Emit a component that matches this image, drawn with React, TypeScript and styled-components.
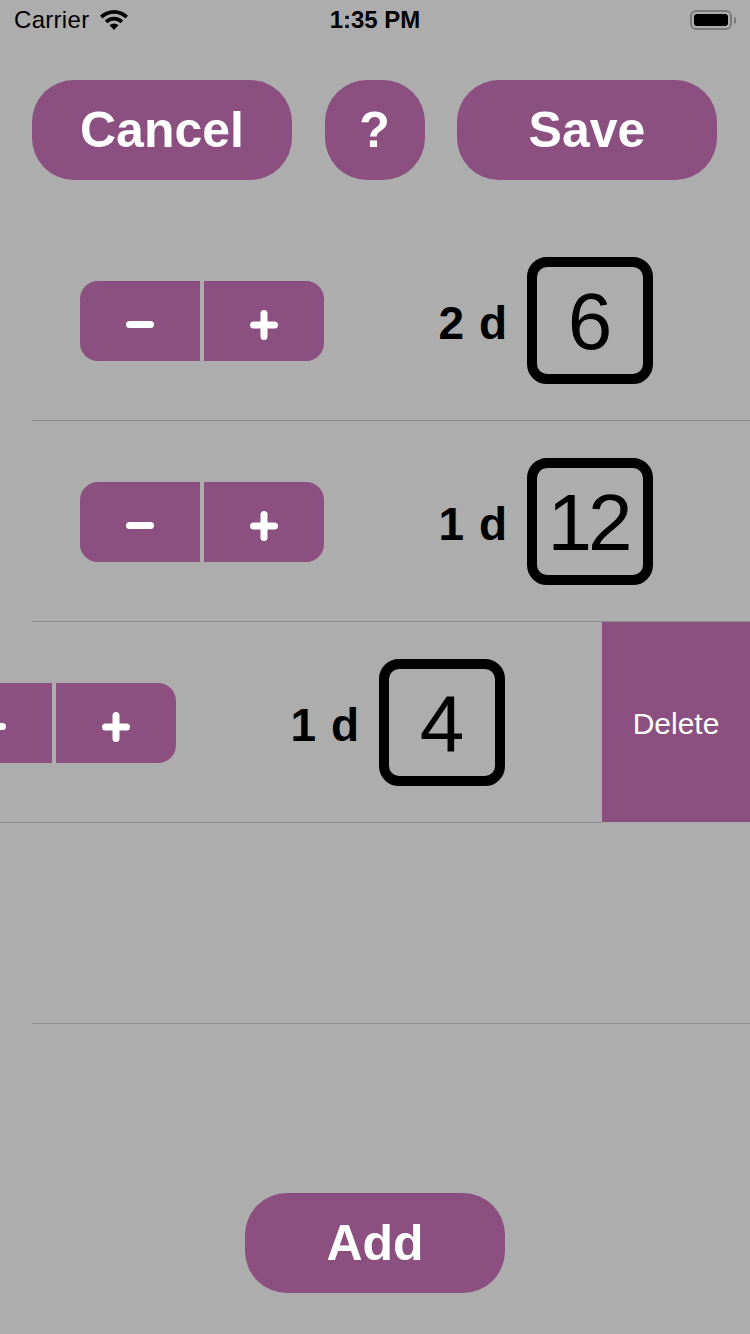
import React from "react";
import styled, { createGlobalStyle } from "styled-components";

const PURPLE = "#8b4f80";
const BG = "#adadad";

const Global = createGlobalStyle`
  html, body { margin: 0; padding: 0; background: ${BG}; }
  body { font-family: "Liberation Sans", Arial, sans-serif; }
  * { box-sizing: border-box; }
`;

const Screen = styled.div`
  width: 750px;
  height: 1334px;
  background: ${BG};
  display: flex;
  flex-direction: column;
  overflow: hidden;
`;

const StatusBar = styled.div`
  height: 40px;
  display: grid;
  grid-template-columns: 1fr auto 1fr;
  align-items: center;
  padding: 0 14px;
  color: #000;
  font-size: 24px;
`;

const Carrier = styled.div`
  display: flex;
  align-items: center;
  gap: 9px;
  font-size: 24px;
  letter-spacing: 0.3px;
`;

const Clock = styled.div`
  font-weight: 700;
  font-size: 24px;
`;

const BatteryWrap = styled.div`
  justify-self: end;
  display: flex;
  align-items: center;
  gap: 2px;
`;

const BatteryBody = styled.div`
  width: 42px;
  height: 20px;
  border: 2px solid #7a7a7a;
  border-radius: 6px;
  padding: 2px;
`;

const BatteryFill = styled.div`
  width: 100%;
  height: 100%;
  background: #000;
  border-radius: 3px;
`;

const BatteryNub = styled.div`
  width: 2px;
  height: 7px;
  background: #7a7a7a;
  border-radius: 0 2px 2px 0;
`;

const TopBar = styled.div`
  display: flex;
  justify-content: space-between;
  padding: 40px 33px 0 32px;
`;

const PillButton = styled.button<{ $w: number }>`
  width: ${(p) => p.$w}px;
  height: 100px;
  border: none;
  border-radius: 42px;
  background: ${PURPLE};
  color: #fff;
  font-family: "Liberation Sans", Arial, sans-serif;
  font-weight: 700;
  font-size: 50px;
  display: flex;
  align-items: center;
  justify-content: center;
  padding: 0;
  cursor: pointer;
`;

const List = styled.div`
  margin-top: 40px;
  display: flex;
  flex-direction: column;
`;

const Row = styled.div`
  width: 750px;
  height: 201px;
  overflow: hidden;
`;

const Track = styled.div<{ $shift: number }>`
  display: flex;
  width: ${(p) => 750 + p.$shift}px;
  transform: translateX(-${(p) => p.$shift}px);
`;

const Cell = styled.div`
  width: 750px;
  flex: none;
  height: 201px;
  display: flex;
  flex-direction: column;
`;

const CellContent = styled.div`
  height: 200px;
  display: flex;
  align-items: center;
  padding: 0 97px 0 80px;
`;

const Separator = styled.div`
  height: 1px;
  margin-left: 32px;
  background: #8c8c8c;
`;

const Stepper = styled.div`
  display: flex;
  gap: 4px;
  height: 80px;
  margin-top: 1px;
`;

const StepButton = styled.button<{ $side: "left" | "right" }>`
  width: 120px;
  height: 80px;
  border: none;
  padding: 8px 0 0;
  background: ${PURPLE};
  color: #fff;
  display: flex;
  align-items: center;
  justify-content: center;
  border-radius: ${(p) => (p.$side === "left" ? "18px 0 0 18px" : "0 18px 18px 0")};
`;

const Spacer = styled.div`
  flex: 1;
`;

const Label = styled.div`
  font-family: "Liberation Sans", Arial, sans-serif;
  font-weight: 700;
  font-size: 46px;
  letter-spacing: 1px;
  color: #000;
  margin-right: 19px;
  padding-top: 6px;
  white-space: pre;
`;

const Die = styled.div`
  width: 126px;
  height: 127px;
  border: 10px solid #000;
  border-radius: 20px;
  display: flex;
  align-items: center;
  justify-content: center;
  font-family: "Liberation Sans", Arial, sans-serif;
  font-weight: 400;
  font-size: 80px;
  letter-spacing: -4px;
  color: #000;
  padding-right: 4px;
  padding-top: 4px;
`;

const DeletePanel = styled.div`
  width: 148px;
  height: 200px;
  flex: none;
  background: ${PURPLE};
  color: #fff;
  font-size: 30px;
  display: flex;
  align-items: center;
  justify-content: center;
  padding-top: 3px;
`;

const EmptyCell = styled.div`
  height: 201px;
  display: flex;
  flex-direction: column;
  justify-content: flex-end;
`;

const Bottom = styled.div`
  flex: 1;
  display: flex;
  justify-content: center;
  align-items: flex-end;
  padding-bottom: 41px;
`;

const Minus = () => (
  <svg width="28" height="8" viewBox="0 0 28 8">
    <rect x="0" y="0" width="28" height="7" rx="3.5" fill="#fff" />
  </svg>
);

const Plus = () => (
  <svg width="28" height="30" viewBox="0 0 28 30">
    <rect x="0" y="11.5" width="28" height="7" rx="3.5" fill="#fff" />
    <rect x="10.5" y="0" width="7" height="30" rx="3.5" fill="#fff" />
  </svg>
);

const Wifi = () => (
  <svg width="32" height="24" viewBox="0 0 32 24">
    <path d="M16 22 L11.5 17.3 A6.5 6.5 0 0 1 20.5 17.3 Z" fill="#000" />
    <path d="M6.8 12.6 A13 13 0 0 1 25.2 12.6 L22.6 15.3 A9.3 9.3 0 0 0 9.4 15.3 Z" fill="#000" />
    <path d="M2 7.8 A19.8 19.8 0 0 1 30 7.8 L27.4 10.5 A16 16 0 0 0 4.6 10.5 Z" fill="#000" />
  </svg>
);

type Dice = { count: number; sides: number };

const DiceRow: React.FC<{ d: Dice; shift?: number }> = ({ d, shift = 0 }) => (
  <Row>
    <Track $shift={shift}>
      <Cell>
        <CellContent>
          <Stepper>
            <StepButton $side="left"><Minus /></StepButton>
            <StepButton $side="right"><Plus /></StepButton>
          </Stepper>
          <Spacer />
          <Label>{`${d.count} d`}</Label>
          <Die>{d.sides}</Die>
        </CellContent>
        <Separator />
      </Cell>
      {shift > 0 && <DeletePanel>Delete</DeletePanel>}
    </Track>
  </Row>
);

export default function App() {
  const dice: Dice[] = [
    { count: 2, sides: 6 },
    { count: 1, sides: 12 },
  ];
  return (
    <Screen>
      <Global />
      <StatusBar>
        <Carrier>
          Carrier
          <Wifi />
        </Carrier>
        <Clock>1:35 PM</Clock>
        <BatteryWrap>
          <BatteryBody>
            <BatteryFill />
          </BatteryBody>
          <BatteryNub />
        </BatteryWrap>
      </StatusBar>
      <TopBar>
        <PillButton $w={260}>Cancel</PillButton>
        <PillButton $w={100}>?</PillButton>
        <PillButton $w={260}>Save</PillButton>
      </TopBar>
      <List>
        {dice.map((d, i) => (
          <DiceRow key={i} d={d} />
        ))}
        <DiceRow d={{ count: 1, sides: 4 }} shift={148} />
        <EmptyCell>
          <Separator />
        </EmptyCell>
      </List>
      <Bottom>
        <PillButton $w={260}>Add</PillButton>
      </Bottom>
    </Screen>
  );
}
